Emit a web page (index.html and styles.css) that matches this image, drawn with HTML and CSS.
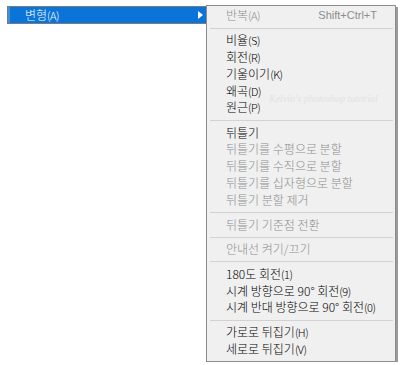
FILE: index.html
```html
<!doctype html>
<html>
<head>
<meta charset="UTF-8">
<title>변형 메뉴</title>
<link rel="stylesheet" href="styles.css">
</head>
<body>
<div class="wrap">
    <div class="parent">
        <span class="parent-label">변형<small>(A)</small></span>
        <span class="arrow"></span>
    </div>
    <div class="menu">
        <div class="item off"><span>반복<small>(A)</small></span><span class="key">Shift+Ctrl+T</span></div>
        <div class="sep"></div>
        <div class="item"><span>비율<small>(S)</small></span></div>
        <div class="item"><span>회전<small>(R)</small></span></div>
        <div class="item"><span>기울이기<small>(K)</small></span></div>
        <div class="item"><span>왜곡<small>(D)</small></span></div>
        <div class="item"><span>원근<small>(P)</small></span></div>
        <div class="sep"></div>
        <div class="item"><span>뒤틀기</span></div>
        <div class="item off"><span>뒤틀기를 수평으로 분할</span></div>
        <div class="item off"><span>뒤틀기를 수직으로 분할</span></div>
        <div class="item off"><span>뒤틀기를 십자형으로 분할</span></div>
        <div class="item off"><span>뒤틀기 분할 제거</span></div>
        <div class="sep"></div>
        <div class="item off"><span>뒤틀기 기준점 전환</span></div>
        <div class="sep"></div>
        <div class="item off"><span>안내선 켜기/끄기</span></div>
        <div class="sep"></div>
        <div class="item"><span>180도 회전<small>(1)</small></span></div>
        <div class="item"><span>시계 방향으로 90° 회전<small>(9)</small></span></div>
        <div class="item"><span>시계 반대 방향으로 90° 회전<small>(0)</small></span></div>
        <div class="sep"></div>
        <div class="item"><span>가로로 뒤집기<small>(H)</small></span></div>
        <div class="item"><span>세로로 뒤집기<small>(V)</small></span></div>
        <div class="mark">Kelvin's photoshop tutorial</div>
    </div>
</div>
</body>
</html>
```
FILE: styles.css
```css
body{margin:0;padding:0;background:#fff;font:300 12px/17px "Noto Sans CJK KR","Liberation Sans",sans-serif;}
small{font-size:11px;letter-spacing:-0.5px;}
.wrap{display:flex;align-items:flex-start;padding:5px 0 0 7px;}

/* 상위 메뉴 항목 */
.parent{display:flex;align-items:center;justify-content:space-between;width:198px;height:16px;margin-top:1px;background:#0a74d8;border:1px solid #7b7b7b;border-right:none;box-shadow:inset 2px 0 0 #3d92e0;color:#fff;}
.parent-label{padding-left:17px;}
.arrow{width:0;height:0;border-left:5px solid #fff;border-top:4px solid transparent;border-bottom:4px solid transparent;margin-right:3px;}

/* 하위 메뉴 */
.menu{position:relative;width:188px;padding:1px 0 4px;background:#f0f0f0;border:1px solid #8c8c8c;box-shadow:2px 2px 0 #9a9a9a;}
.item{display:flex;align-items:center;height:16.8px;padding:0 18px 0 19px;color:#000;white-space:nowrap;}
.item.off{color:#8d8d8d;}
.key{margin-left:auto;color:#8d8d8d;font:11px "Liberation Sans",sans-serif;}
.sep{height:1px;margin:4px 2px 3px 3px;background:#d2d2d2;}
.mark{position:absolute;left:62px;top:87px;color:#e2e2e2;font:italic 10px "Liberation Serif",serif;white-space:nowrap;pointer-events:none;}
```
